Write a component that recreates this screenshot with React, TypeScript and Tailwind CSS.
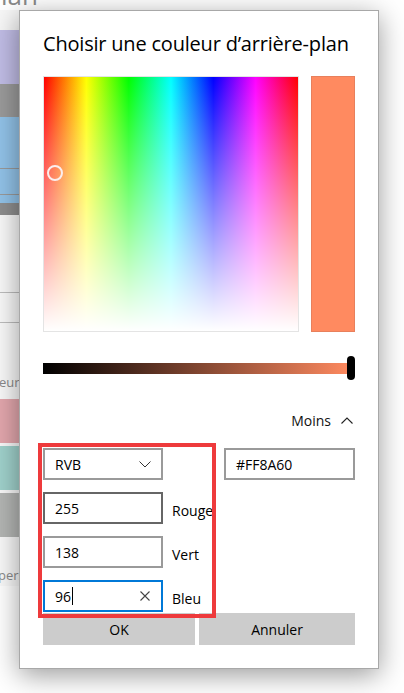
import React from "react";

const font = { fontFamily: '"Open Sans", "Noto Sans", sans-serif' };

function ChevronDown() {
  return (
    <svg width="12" height="7" viewBox="0 0 12 7" fill="none">
      <polyline points="0.5,0.5 6,6 11.5,0.5" stroke="#333" strokeWidth="1" />
    </svg>
  );
}

function ChevronUp() {
  return (
    <svg width="12" height="7" viewBox="0 0 12 7" fill="none">
      <polyline points="0.5,6.5 6,1 11.5,6.5" stroke="#222" strokeWidth="1.1" />
    </svg>
  );
}

function Cross() {
  return (
    <svg width="10" height="10" viewBox="0 0 10 10" fill="none">
      <path d="M0.5 0.5L9.5 9.5M9.5 0.5L0.5 9.5" stroke="#444" strokeWidth="1.1" />
    </svg>
  );
}

// one R/V/B channel row
function Channel({ value, label, border, focus }: { value: string; label: string; border: string; focus?: boolean }) {
  return (
    <div className="flex items-center">
      <div className={`flex h-[32px] w-[120px] items-center border-2 pl-[10px] pr-[10px] ${border}`}>
        <span className="text-[14px] text-black">{value}</span>
        {focus && <span className="ml-[1px] h-[18px] w-[1px] bg-black" />}
        {focus && (
          <span className="ml-auto mr-[1px] flex">
            <Cross />
          </span>
        )}
      </div>
      <span className="ml-[9px] mt-[4px] text-[14px] text-black">{label}</span>
    </div>
  );
}

export default function App() {
  return (
    <div className="relative h-[693px] w-[404px] overflow-hidden bg-white" style={font}>
      {/* page behind the dialog */}
      <div className="flex w-[220px] flex-col">
        <div className="h-[10px] overflow-hidden">
          <div className="-mt-[18px] ml-[1px] text-[26px] leading-[26px] text-[#8a8a8a]">lan</div>
        </div>
        <div className="h-[20px] bg-[#f7f7f7]" />
        <div className="h-[54px] bg-[#c1bde6]" />
        <div className="h-[33px] bg-[#9b9b9b]" />
        <div className="h-[51px] bg-[#92c3e9]" />
        <div className="h-[1px] bg-[#9a9a9a]" />
        <div className="h-[25px] bg-[#92c3e9]" />
        <div className="h-[1px] bg-[#9a9a9a]" />
        <div className="h-[8px] bg-[#92c3e9]" />
        <div className="h-[12px] bg-[#8e8e8e]" />
        <div className="h-[77px] bg-[#f9f9f9]" />
        <div className="h-[1px] bg-[#bdbdbd]" />
        <div className="h-[29px] bg-[#f9f9f9]" />
        <div className="h-[1px] bg-[#bdbdbd]" />
        <div className="flex h-[76px] items-end bg-[#f9f9f9] pb-[9px]">
          <span className="-ml-[1px] text-[13px] leading-[16px] text-[#8a8a8a]">eur</span>
        </div>
        <div className="h-[44px] bg-[#e3a7ad]" />
        <div className="h-[3px] bg-[#f9f9f9]" />
        <div className="h-[44px] bg-[#a0d2cc]" />
        <div className="h-[3px] bg-[#f9f9f9]" />
        <div className="h-[44px] bg-[#b4b6b4]" />
        <div className="h-[25px] bg-[#f9f9f9]" />
        <div className="bg-[#f9f9f9]">
          <span className="-ml-[2px] text-[13px] leading-[16px] text-[#8a8a8a]">pers</span>
        </div>
      </div>

      {/* dialog */}
      <div className="absolute left-[19px] top-[10px] flex h-[659px] w-[360px] flex-col border border-[#a8a8a8] bg-white px-[23px] pt-[19px] shadow-[0_6px_26px_rgba(0,0,0,0.4)]">
        <h1 className="text-[20px] leading-[28px] tracking-[-0.2px] text-black">Choisir une couleur d’arrière-plan</h1>

        <div className="mt-[18px] flex gap-[12px]">
          <div className="relative h-[256px] w-[256px] border border-[#e4e4e4] bg-[linear-gradient(to_right,#f00,#ff0,#0f0,#0ff,#00f,#f0f,#f00)]">
            <div className="absolute inset-0 bg-[linear-gradient(to_bottom,rgba(255,255,255,0),#fff)]" />
            <div className="absolute left-[3px] top-[88px] h-[16px] w-[16px] rounded-full border-2 border-[#fbeeee]" />
          </div>
          <div className="h-[256px] w-[44px] border border-[#e8805c] bg-[#ff8a60]" />
        </div>

        <div className="relative mt-[24px] flex h-[24px] items-center">
          <div className="h-[11px] w-[308px] bg-[linear-gradient(to_right,#000,#ff8a60)]" />
          <div className="absolute right-0 top-0 h-[24px] w-[8px] rounded-full bg-black" />
        </div>

        <div className="mt-[30px] flex items-center justify-end gap-[10px] pr-[2px]">
          <span className="text-[14px] text-[#111]">Moins</span>
          <ChevronUp />
        </div>

        <div className="mt-[17px] flex items-center justify-between">
          <div className="flex h-[32px] w-[120px] items-center justify-between border-2 border-[#9a9a9a] pl-[10px] pr-[10px]">
            <span className="text-[14px] text-black">RVB</span>
            <ChevronDown />
          </div>
          <div className="flex h-[32px] w-[131px] items-center border-2 border-[#9a9a9a] pl-[10px]">
            <span className="text-[14px] text-black">#FF8A60</span>
          </div>
        </div>

        <div className="mt-[12px] flex flex-col gap-[12px]">
          <Channel value="255" label="Rouge" border="border-[#666]" />
          <Channel value="138" label="Vert" border="border-[#9a9a9a]" />
          <Channel value="96" label="Bleu" border="border-[#0078d7]" focus />
        </div>

        <div className="mt-[1px] flex gap-[4px]">
          <button className="h-[32px] w-[152px] bg-[#cccccc] text-[14px] text-black">OK</button>
          <button className="h-[32px] w-[156px] bg-[#cccccc] text-[14px] text-black">Annuler</button>
        </div>
      </div>

      {/* annotation frame */}
      <div className="absolute left-[38px] top-[443px] h-[175px] w-[178px] border-4 border-[#ee3a3c]" />
    </div>
  );
}
